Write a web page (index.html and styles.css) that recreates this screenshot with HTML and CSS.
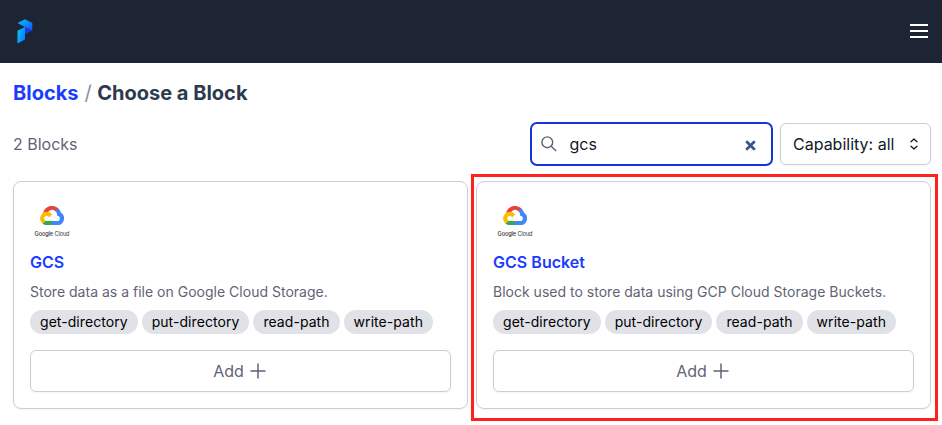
FILE: index.html
```html
<!DOCTYPE html>
<html lang="en">
<head>
<meta charset="utf-8">
<title>Blocks</title>
<link rel="stylesheet" href="styles.css">
</head>
<body>
<svg class="defs" aria-hidden="true">
  <symbol id="cloud" viewBox="0 0 24 19.3">
    <path fill="#ea4335" d="M15.3 5.2 16 5.2 18.1 3.1 18.2 2.3A9.3 9.3 0 0 0 3 6.8L3.7 6.7 7.9 6 8.3 5.7A5.2 5.2 0 0 1 15.3 5.2Z"/>
    <path fill="#4285f4" d="M21.1 6.8A9.4 9.4 0 0 0 18.2 2.2L15.3 5.1A5.2 5.2 0 0 1 17.2 9.2V9.8A2.6 2.6 0 0 1 17.2 15H12L11.5 15.5V18.7L12 19.2H17.2A6.8 6.8 0 0 0 21.1 6.8Z"/>
    <path fill="#34a853" d="M6.8 19.2H12V15H6.8A2.6 2.6 0 0 1 5.7 14.8L5 15 2.9 17.1 2.7 17.8A6.7 6.7 0 0 0 6.8 19.2Z"/>
    <path fill="#fbbc05" d="M6.8 5.7A6.8 6.8 0 0 0 2.7 17.8L5.7 14.8A2.6 2.6 0 1 1 9.2 11.4L12.2 8.4A6.8 6.8 0 0 0 6.8 5.7Z"/>
  </symbol>
  <symbol id="plus" viewBox="0 0 20 20">
    <path d="M10 2.5V17.5M2.5 10H17.5" fill="none" stroke="currentColor" stroke-width="1.5"/>
  </symbol>
</svg>
<header class="navbar">
  <svg class="logo" viewBox="0 0 16 25">
    <defs>
      <linearGradient id="g1" x1="0" y1="0" x2="1" y2="1"><stop offset="0" stop-color="#06c8ff"/><stop offset="1" stop-color="#1452fb"/></linearGradient>
      <linearGradient id="g2" x1="0" y1="0" x2="1" y2=".7"><stop offset="0" stop-color="#04d3ff"/><stop offset="1" stop-color="#0a78fd"/></linearGradient>
    </defs>
    <path fill="#1638ee" d="M8 8 15.3 11.5 8 15.2Z"/>
    <path fill="url(#g1)" d="M.5 4 8 .2 15.3 4V11.5L8 8Z"/>
    <path fill="url(#g2)" d="M.5 11.8 8 8V20.6L.5 24.4Z"/>
  </svg>
  <svg class="menu" viewBox="0 0 18 14"><path d="M0 1H18M0 7H18M0 13H18" stroke="#fff" stroke-width="2"/></svg>
</header>
<main class="page">
  <h1 class="crumbs"><a class="crumb-link">Blocks</a><span class="slash">/</span><span>Choose a Block</span></h1>
  <div class="toolbar">
    <span class="count">2 Blocks</span>
    <div class="search">
      <svg class="search-icon" viewBox="0 0 16 16" fill="none" stroke="#5b6274" stroke-width="1.4"><circle cx="6.3" cy="6.3" r="5.4"/><path d="M10.2 10.2 15.2 15"/></svg>
      <span class="query">gcs</span>
      <svg class="clear" viewBox="0 0 10 10"><path d="M1.1 1.1 8.9 8.9M8.9 1.1 1.1 8.9" stroke="#35558f" stroke-width="2.4"/></svg>
    </div>
    <div class="select"><span>Capability: all</span>
      <svg class="chevrons" viewBox="0 0 8 12" fill="none" stroke="#111827" stroke-width="1.3" stroke-linecap="round" stroke-linejoin="round"><path d="M1 3.7 4 .9 7 3.7M1 8.3 4 11.1 7 8.3"/></svg>
    </div>
  </div>
  <div class="cards">
    <article class="card">
      <div class="brand"><svg class="cloud"><use href="#cloud"/></svg><div class="brand-name"><b>Google</b> Cloud</div></div>
      <h2 class="title">GCS</h2>
      <p class="desc">Store data as a file on Google Cloud Storage.</p>
      <div class="tags"><span class="tag">get-directory</span><span class="tag">put-directory</span><span class="tag">read-path</span><span class="tag">write-path</span></div>
      <div class="add">Add<svg class="plus"><use href="#plus"/></svg></div>
    </article>
    <article class="card highlighted">
      <div class="brand"><svg class="cloud"><use href="#cloud"/></svg><div class="brand-name"><b>Google</b> Cloud</div></div>
      <h2 class="title">GCS Bucket</h2>
      <p class="desc">Block used to store data using GCP Cloud Storage Buckets.</p>
      <div class="tags"><span class="tag">get-directory</span><span class="tag">put-directory</span><span class="tag">read-path</span><span class="tag">write-path</span></div>
      <div class="add">Add<svg class="plus"><use href="#plus"/></svg></div>
    </article>
  </div>
</main>
</body>
</html>
```
FILE: styles.css
```css
* { box-sizing: border-box; }
body { margin: 0; height: 425px; overflow: hidden; background: #fff; color: #111827; font: 16px/24px Inter, sans-serif; }
svg { display: block; flex: none; }
.defs { position: absolute; width: 0; height: 0; }
.navbar { height: 63px; background: #1d2433; display: flex; align-items: center; justify-content: space-between; padding: 0 14px 1px 17px; }
.logo { width: 16px; height: 25px; }
.menu { width: 18px; height: 14px; }
.page { padding: 16px 11px 0 13px; }
.crumbs { margin: 0; display: flex; font-size: 20px; line-height: 28px; font-weight: 700; color: #2d3a4d; }
.crumb-link { color: #1a3cff; }
.slash { font-weight: 400; color: #8492ad; margin: 0 5.5px 0 6px; }
.toolbar { display: flex; align-items: center; height: 44px; margin-top: 15px; }
.count { flex: 1; color: #5f6475; }
.search { width: 243px; height: 44px; border: 2px solid #1535d9; border-radius: 7px; display: flex; align-items: center; padding: 0 15px 0 9px; margin-right: 7px; }
.search-icon { width: 16px; height: 16px; }
.query { flex: 1; margin-left: 12.5px; }
.clear { width: 11px; height: 11px; margin-top: 3px; }
.select { width: 151px; height: 42px; border: 1px solid #cbced6; border-radius: 6px; display: flex; align-items: center; justify-content: space-between; padding: 0 12px; box-shadow: 0 1px 2px #0000000d; }
.chevrons { width: 8px; height: 12px; }
.cards { display: grid; grid-template-columns: 1fr 1fr; gap: 8px; margin-top: 15px; }
.card { position: relative; height: 228px; border: 1px solid #cbced6; border-radius: 8px; padding: 16px; box-shadow: 0 1px 2px #0000000d; }
.highlighted::after { content: ""; position: absolute; inset: -8px -8px -13px -6px; border: 3px solid #ff211c; }
.brand { width: 44px; height: 44px; padding-top: 8px; display: flex; flex-direction: column; align-items: center; }
.cloud { width: 24px; height: 19.3px; }
.brand-name { margin-top: 5px; font-size: 5.6px; line-height: 8px; letter-spacing: -.12px; color: #333; white-space: nowrap; }
.brand-name b { font-weight: 500; }
.title { margin: 8px 0 0; font-size: 16px; line-height: 24px; font-weight: 600; letter-spacing: .03px; color: #1a3cff; }
.desc { margin: 8px 0 0; font-size: 14px; line-height: 20px; letter-spacing: .01px; color: #5f6475; }
.tags { display: flex; gap: 4px; margin-top: 8px; }
.tag { height: 24px; padding: 0 10px; border-radius: 12px; background: #e1e2e8; color: #000; font-size: 14px; line-height: 24px; letter-spacing: .06px; }
.add { height: 42px; margin-top: 16px; border: 1px solid #cbced6; border-radius: 6px; display: flex; align-items: center; justify-content: center; gap: 4px; color: #5f6475; box-shadow: 0 1px 2px #0000000d; }
.plus { width: 20px; height: 20px; }
```
